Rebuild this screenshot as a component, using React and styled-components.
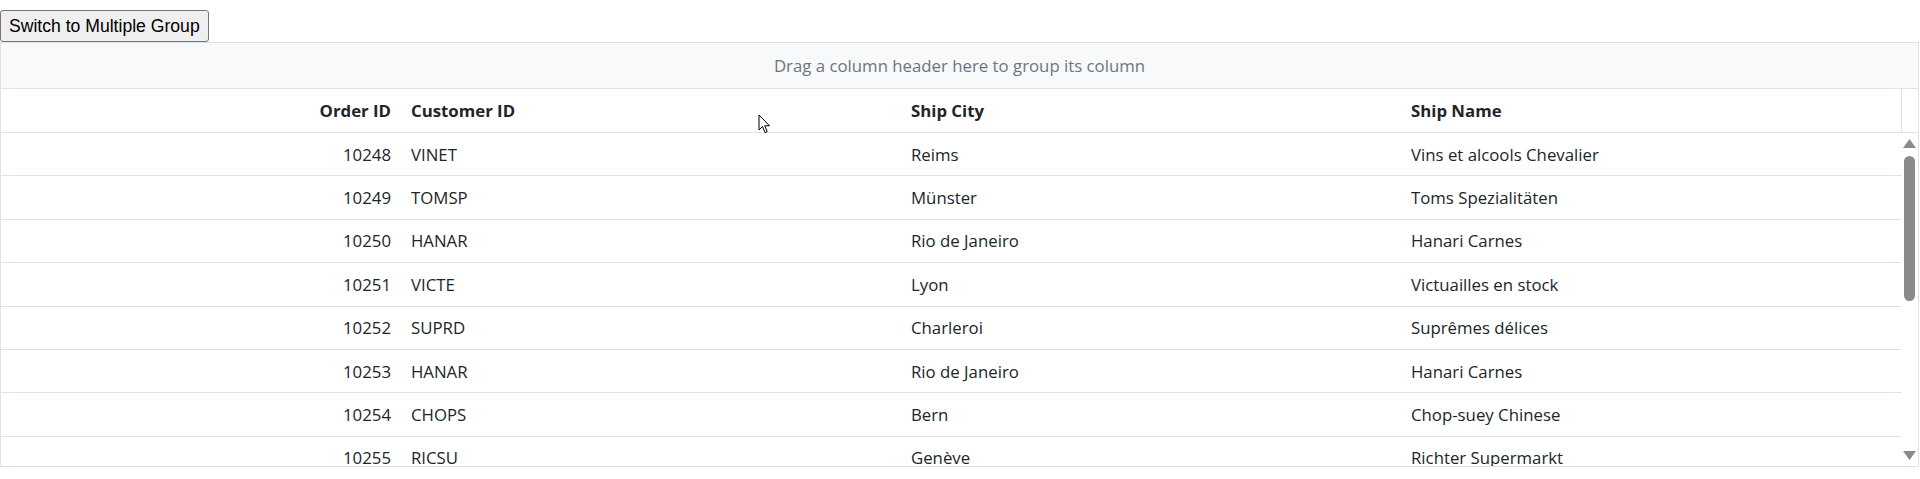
import React from "react";
import styled, { createGlobalStyle } from "styled-components";

const Global = createGlobalStyle`
  html, body { margin: 0; padding: 0; background: #fff; }
  body { font-family: "Open Sans", "Noto Sans", sans-serif; }
`;

const Page = styled.div`
  position: relative;
  padding-top: 10px;
  width: 1920px;
`;

const Button = styled.button`
  display: block;
  height: 32px;
  padding: 0 8px;
  margin: 0;
  font-family: "Liberation Sans", Arial, sans-serif;
  font-size: 17.6px;
  color: #000;
  background: #efefef;
  border: 1px solid #767676;
  border-radius: 3px;
`;

const Grid = styled.div`
  width: 1919px;
  box-sizing: border-box;
  border: 1px solid #dee2e6;
  font-family: "Open Sans", sans-serif;
  font-size: 16.8px;
  color: #212529;
`;

const GroupDrop = styled.div`
  height: 45px;
  background: #f8f9fa;
  border-bottom: 1px solid #dee2e6;
  display: flex;
  align-items: center;
  justify-content: center;
  color: #6c757d;
`;

const HeaderRow = styled.div`
  display: grid;
  grid-template-columns: 400px 500px 500px 500px 1fr;
  height: 44px;
  box-sizing: border-box;
  border-bottom: 1px solid #dee2e6;
  font-weight: 700;
`;

const Cell = styled.div`
  display: flex;
  align-items: center;
  justify-content: ${(p) => (p.$right ? "flex-end" : "flex-start")};
  padding: ${(p) => (p.$right ? "0 10px 0 0" : "0 0 0 10px")};
  white-space: nowrap;
  overflow: hidden;
`;

const Gutter = styled.div`
  border-left: 1px solid #dee2e6;
`;

const Body = styled.div`
  display: flex;
  height: 333px;
  overflow: hidden;
`;

const Rows = styled.div`
  width: 1900px;
  overflow: hidden;
`;

const Row = styled.div`
  display: grid;
  grid-template-columns: 400px 500px 500px 500px;
  height: 43.4px;
  box-sizing: border-box;
  border-bottom: 1px solid #dee2e6;
`;

const Scrollbar = styled.div`
  flex: 1;
  display: flex;
  flex-direction: column;
  align-items: center;
  padding: 6px 0 6px;
  box-sizing: border-box;
`;

const Arrow = styled.svg`
  display: block;
  width: 13px;
  height: 9px;
  flex: none;
`;

const Thumb = styled.div`
  width: 11px;
  height: 145px;
  margin-top: 8px;
  border-radius: 6px;
  background: #8a8a8a;
  flex: none;
`;

const Track = styled.div`
  flex: 1;
`;

const Cursor = styled.svg`
  position: absolute;
  left: 758px;
  top: 114px;
  width: 13px;
  height: 20px;
  pointer-events: none;
`;

const data = [
  ["10248", "VINET", "Reims", "Vins et alcools Chevalier"],
  ["10249", "TOMSP", "Münster", "Toms Spezialitäten"],
  ["10250", "HANAR", "Rio de Janeiro", "Hanari Carnes"],
  ["10251", "VICTE", "Lyon", "Victuailles en stock"],
  ["10252", "SUPRD", "Charleroi", "Suprêmes délices"],
  ["10253", "HANAR", "Rio de Janeiro", "Hanari Carnes"],
  ["10254", "CHOPS", "Bern", "Chop-suey Chinese"],
  ["10255", "RICSU", "Genève", "Richter Supermarkt"],
  ["10256", "WELLI", "Resende", "Wellington Importadora"],
];

export default function App() {
  return (
    <Page>
      <Global />
      <Button>Switch to Multiple Group</Button>
      <Grid>
        <GroupDrop>Drag a column header here to group its column</GroupDrop>
        <HeaderRow>
          <Cell $right>Order ID</Cell>
          <Cell>Customer ID</Cell>
          <Cell>Ship City</Cell>
          <Cell>Ship Name</Cell>
          <Gutter />
        </HeaderRow>
        <Body>
          <Rows>
            {data.map((r) => (
              <Row key={r[0]}>
                <Cell $right>{r[0]}</Cell>
                <Cell>{r[1]}</Cell>
                <Cell>{r[2]}</Cell>
                <Cell>{r[3]}</Cell>
              </Row>
            ))}
          </Rows>
          <Scrollbar>
            <Arrow viewBox="0 0 13 9">
              <polygon points="6.5,0 13,9 0,9" fill="#8a8a8a" />
            </Arrow>
            <Thumb />
            <Track />
            <Arrow viewBox="0 0 13 9">
              <polygon points="0,0 13,0 6.5,9" fill="#8a8a8a" />
            </Arrow>
          </Scrollbar>
        </Body>
      </Grid>
      <Cursor viewBox="0 0 13 20">
        <path
          d="M1 1 L1 16 L4.5 12.5 L7 18.5 L9.2 17.6 L6.8 11.8 L11.5 11.8 Z"
          fill="#fff"
          stroke="#000"
          strokeWidth="1"
          strokeLinejoin="round"
        />
      </Cursor>
    </Page>
  );
}
